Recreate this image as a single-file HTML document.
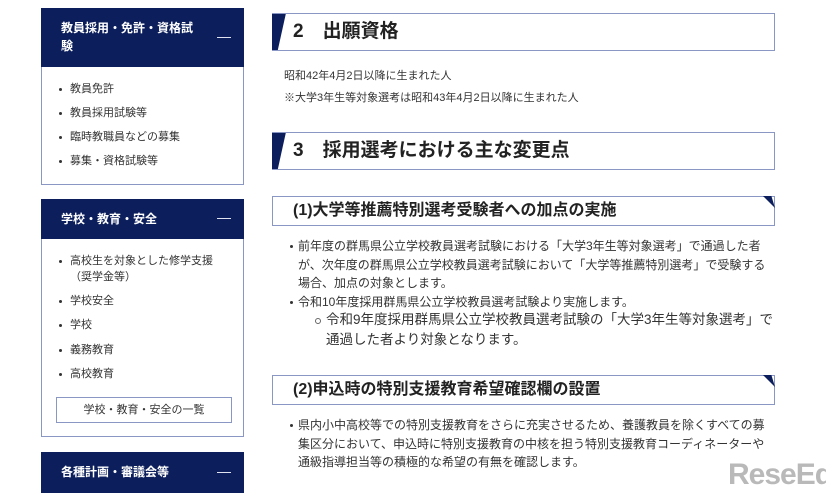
<!DOCTYPE html>
<html><head><meta charset="utf-8"><style>
*{margin:0;padding:0;box-sizing:border-box}
body{width:826px;height:493px;overflow:hidden;background:#fff;font-family:"Liberation Sans","Noto Sans CJK JP",sans-serif;color:#333;position:relative}
.abs{position:absolute}
.hd{background:#0c1f5c;color:#fff;font-weight:bold;font-size:12px;left:41px;width:203px;padding-left:20px}
.hd .m{position:absolute;right:13px;top:50%;width:14px;height:1px;background:#dfe3ef;margin-top:-1px}
.bx{left:41px;width:203px;border:1px solid #8a96c4;border-top:none}
.li{position:absolute;left:28px;font-size:11px;color:#333;white-space:nowrap;line-height:16px}
.li:before{content:"";position:absolute;left:-11px;top:7px;width:3px;height:3px;border-radius:50%;background:#333}
.h2{left:272px;width:503px;height:38px;border:1px solid #8a96c4;border-left:none;font-size:19px;font-weight:bold;color:#222;line-height:36px;padding-left:21px;overflow:hidden}
.h2 .s{position:absolute;left:0;top:-1px;width:14px;height:38px;background:#0c1f5c;clip-path:polygon(0 0,100% 0,40% 100%,0 100%)}
.h3{left:272px;width:503px;height:30px;border:1px solid #8a96c4;font-size:16px;font-weight:bold;color:#222;line-height:28px;padding-left:20px}
.h3 .t{position:absolute;right:-1px;top:-1px;width:12px;height:12px;background:#0c1f5c;clip-path:polygon(0 0,70% 0,100% 100%)}
.p{font-size:11px;color:#333;white-space:nowrap;left:284px}
.b{position:absolute;left:298px;font-size:12px;line-height:18.5px;color:#333;white-space:nowrap}
.b:before{content:"";position:absolute;left:-8px;top:8px;width:3px;height:3px;border-radius:50%;background:#333}
.c{position:absolute;left:326px;font-size:13.5px;line-height:20px;color:#333;white-space:nowrap}
.c:before{content:"";position:absolute;left:-11px;top:8px;width:4px;height:4px;border-radius:50%;border:1px solid #666}
</style></head><body>
<div class="abs hd" style="top:8px;height:59px;padding-top:11px;line-height:18px;padding-right:40px">教員採用・免許・資格試験<div class="m"></div></div>
<div class="abs bx" style="top:67px;height:118px">
<div class="li" style="top:14px">教員免許</div>
<div class="li" style="top:38px">教員採用試験等</div>
<div class="li" style="top:62px">臨時教職員などの募集</div>
<div class="li" style="top:86px">募集・資格試験等</div>
</div>
<div class="abs hd" style="top:199px;height:40px;line-height:40px">学校・教育・安全<div class="m"></div></div>
<div class="abs bx" style="top:239px;height:198px">
<div class="li" style="top:14px">高校生を対象とした修学支援<br>（奨学金等）</div>
<div class="li" style="top:54px">学校安全</div>
<div class="li" style="top:78px">学校</div>
<div class="li" style="top:103px">義務教育</div>
<div class="li" style="top:127px">高校教育</div>
<div style="position:absolute;left:14px;top:158px;width:176px;height:26px;border:1px solid #8a96c4;font-size:11px;text-align:center;line-height:24px">学校・教育・安全の一覧</div>
</div>
<div class="abs hd" style="top:452px;height:41px;line-height:40px">各種計画・審議会等<div class="m"></div></div>

<div class="abs h2" style="top:13px"><div class="s"></div>2　出願資格</div>
<div class="abs p" style="top:67px">昭和42年4月2日以降に生まれた人</div>
<div class="abs p" style="top:89px">※大学3年生等対象選考は昭和43年4月2日以降に生まれた人</div>
<div class="abs h2" style="top:132px"><div class="s"></div>3　採用選考における主な変更点</div>
<div class="abs h3" style="top:196px"><div class="t"></div>(1)大学等推薦特別選考受験者への加点の実施</div>
<div class="b" style="top:237px">前年度の群馬県公立学校教員選考試験における「大学3年生等対象選考」で通過した者<br>が、次年度の群馬県公立学校教員選考試験において「大学等推薦特別選考」で受験する<br>場合、加点の対象とします。</div>
<div class="b" style="top:293px">令和10年度採用群馬県公立学校教員選考試験より実施します。</div>
<div class="c" style="top:310px">令和9年度採用群馬県公立学校教員選考試験の「大学3年生等対象選考」で<br>通過した者より対象となります。</div>
<div class="abs h3" style="top:375px"><div class="t"></div>(2)申込時の特別支援教育希望確認欄の設置</div>
<div class="b" style="top:416px">県内小中高校等での特別支援教育をさらに充実させるため、養護教員を除くすべての募<br>集区分において、申込時に特別支援教育の中核を担う特別支援教育コーディネーターや<br>通級指導担当等の積極的な希望の有無を確認します。</div>
<div class="abs" style="left:728px;top:458px;font-size:30px;font-weight:bold;color:#b9b9b9;letter-spacing:-1px;line-height:34px">ReseEd</div>
</body></html>
